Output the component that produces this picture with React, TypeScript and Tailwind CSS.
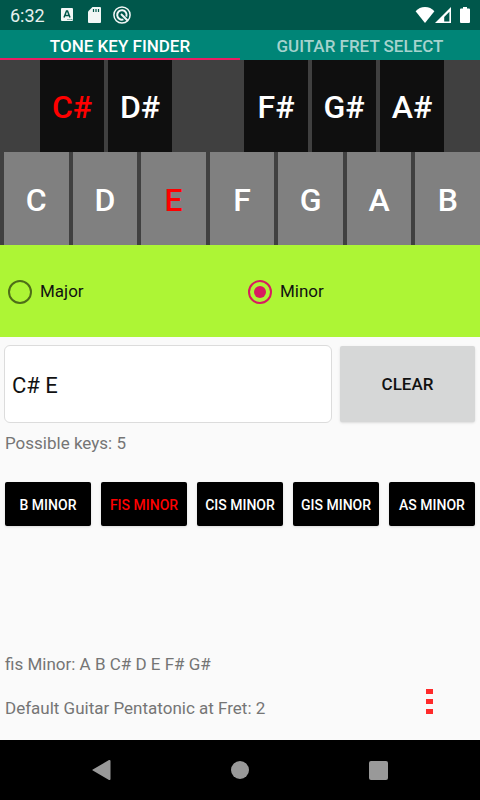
import React, { useState } from 'react';
import { clsx } from 'clsx';

type Mode = 'Major' | 'Minor';

// null is the gap between D# and F#
const BLACK_KEYS: (string | null)[] = ['C#', 'D#', null, 'F#', 'G#', 'A#'];
const WHITE_KEYS = ['C', 'D', 'E', 'F', 'G', 'A', 'B'];
const POSSIBLE_KEYS = ['B Minor', 'fis Minor', 'cis Minor', 'gis Minor', 'as Minor'];

function StatusBar() {
  return (
    <header className="flex h-[30px] items-center justify-between bg-[#00574b] pl-2.5 pr-2 text-white">
      <div className="flex items-center">
        <span className="w-[51px] pt-0.5 text-[18px] leading-7 text-[#e6f0ee]">6:32</span>
        {/* keyboard language */}
        <svg className="h-4 w-3" viewBox="0 0 12 16" fill="none">
          <rect x="0" y="1" width="12" height="13" rx="1" fill="#f2f7f6" />
          <path d="M3 10.5 5.5 4h1L9 10.5M4 8.5h4" stroke="#00574b" strokeWidth="1.5" />
          <path d="M6.5 12.5h1M8.5 12.5h1M10.3 12.5h1" stroke="#00574b" strokeWidth="0.8" />
        </svg>
        {/* sd card */}
        <svg className="ml-[15px] h-4 w-[13px]" viewBox="0 0 13 16" fill="none">
          <path d="M4.5 0H12a1 1 0 0 1 1 1v14a1 1 0 0 1-1 1H1a1 1 0 0 1-1-1V4.5z" fill="#f2f7f6" />
          <path d="M5.5 2v3M8 2v3M10.5 2v3" stroke="#00574b" strokeWidth="1.2" />
        </svg>
        <svg className="ml-3 h-[18px] w-[18px]" viewBox="0 0 18 18" fill="none" stroke="#f2f7f6">
          <circle cx="9" cy="9" r="8.1" strokeWidth="1.5" />
          <path d="M13.3 10.6A4.7 4.7 0 1 0 10.4 13.4" strokeWidth="2" />
          <path d="M8 8 14.8 14.8" strokeWidth="2" />
        </svg>
      </div>
      <div className="flex items-center">
        <svg className="h-4 w-5" viewBox="0 0 20 16">
          <path d="M10 16 .6 4.2C3 1.6 6.3 0 10 0s7 1.6 9.4 4.2z" fill="#fff" />
        </svg>
        <svg className="h-4 w-4" viewBox="0 0 16 16">
          <path d="M16 0v16H0zM14.4 4.8 9.2 10v4.4h5.2z" fill="#fff" fillRule="evenodd" />
        </svg>
        <svg className="ml-[9px] mr-0.5 h-4 w-2.5" viewBox="0 0 10 16">
          <path d="M3 0h4v1.6h2a1 1 0 0 1 1 1V15a1 1 0 0 1-1 1H1a1 1 0 0 1-1-1V2.6a1 1 0 0 1 1-1h2z" fill="#fff" />
        </svg>
      </div>
    </header>
  );
}

function Tabs() {
  return (
    <nav className="grid h-[30px] grid-cols-2 bg-[#008577] text-[17px] font-medium leading-6">
      <button className="border-b-2 border-[#e91e63] pt-1 text-white">TONE KEY FINDER</button>
      <button className="border-b-2 border-transparent pt-1 text-[#a6d3ce]">GUITAR FRET SELECT</button>
    </nav>
  );
}

interface PianoProps {
  notes: string[];
  onToggle: (note: string) => void;
}

function Piano({ notes, onToggle }: PianoProps) {
  return (
    <section className="bg-[#404040] text-[32px] font-medium">
      <div className="flex h-[92px] gap-1 pl-10 pr-9">
        {BLACK_KEYS.map((note, i) =>
          note ? (
            <button
              key={note}
              onClick={() => onToggle(note)}
              className={clsx('min-w-0 flex-1 bg-[#0f0f0f] pt-0.5', notes.includes(note) ? 'text-[#ff0000]' : 'text-white')}
            >
              {note}
            </button>
          ) : (
            <div key={i} className="flex-1" />
          )
        )}
      </div>
      <div className="flex h-[93px] gap-1 pl-1">
        {WHITE_KEYS.map((note) => (
          <button
            key={note}
            onClick={() => onToggle(note)}
            className={clsx('min-w-0 flex-1 bg-[#808080] pt-0.5', notes.includes(note) ? 'text-[#ff0000]' : 'text-white')}
          >
            {note}
          </button>
        ))}
      </div>
    </section>
  );
}

interface ModeRadioProps {
  value: Mode;
  checked: boolean;
  onChange: (mode: Mode) => void;
}

function ModeRadio({ value, checked, onChange }: ModeRadioProps) {
  return (
    <label className="flex items-center gap-2 pl-2 pt-0.5 text-[17px] text-[#111]">
      <input
        type="radio"
        name="mode"
        value={value}
        checked={checked}
        onChange={() => onChange(value)}
        className="grid h-6 w-6 appearance-none place-items-center rounded-full border-2 border-[#4e6e18] before:h-3 before:w-3 before:rounded-full checked:border-[#d81b60] checked:before:bg-[#d81b60]"
      />
      {value}
    </label>
  );
}

function NavBar() {
  return (
    <footer className="grid h-[60px] grid-cols-[138px_138px_138px] place-items-center justify-center bg-black">
      <button aria-label="Back">
        <svg className="h-5 w-5" viewBox="0 0 20 20">
          <path d="M17.5 0a1 1 0 0 1 1 1v18a1 1 0 0 1-1.5.9L.8 10.6a.7.7 0 0 1 0-1.2L17 .1z" fill="#999" />
        </svg>
      </button>
      <button aria-label="Home" className="h-[18px] w-[18px] rounded-full bg-[#999]" />
      <button aria-label="Overview" className="h-[19px] w-[19px] rounded-[2px] bg-[#999]" />
    </footer>
  );
}

export default function App() {
  const [notes, setNotes] = useState<string[]>(['C#', 'E']);
  const [mode, setMode] = useState<Mode>('Minor');
  const [selected, setSelected] = useState('fis Minor');

  const toggleNote = (note: string) => {
    setNotes((prev) => (prev.includes(note) ? prev.filter((n) => n !== note) : [...prev, note]));
  };

  return (
    <div className="flex min-h-screen flex-col bg-[#fafafa] font-[Roboto,sans-serif]">
      <StatusBar />
      <Tabs />
      <Piano notes={notes} onToggle={toggleNote} />

      <div role="radiogroup" aria-label="Mode" className="grid h-[92px] grid-cols-2 bg-[#adf535]">
        <ModeRadio value="Major" checked={mode === 'Major'} onChange={setMode} />
        <ModeRadio value="Minor" checked={mode === 'Minor'} onChange={setMode} />
      </div>

      <main className="flex flex-1 flex-col">
        <div className="flex items-center gap-2 pl-1 pr-[5px] pt-2">
          <input
            aria-label="Selected tones"
            readOnly
            value={notes.join(' ')}
            className="h-[78px] min-w-0 flex-1 rounded-md border border-[#dcdcdc] bg-white px-[7px] pt-0.5 text-[22px] text-[#111] outline-none"
          />
          <button
            onClick={() => setNotes([])}
            className="h-[76px] w-[135px] rounded-[2px] bg-[#d6d7d7] pt-0.5 text-[17px] font-medium text-[#111] shadow-sm"
          >
            CLEAR
          </button>
        </div>

        <p className="mt-2.5 px-[5px] text-[17px] leading-5 text-[#757575]">Possible keys: {POSSIBLE_KEYS.length}</p>

        <div className="mt-[29px] grid grid-cols-5 gap-2.5 px-[5px]">
          {POSSIBLE_KEYS.map((name) => (
            <button
              key={name}
              onClick={() => setSelected(name)}
              className={clsx(
                'h-11 whitespace-nowrap rounded-[2px] bg-black pt-0.5 text-[14px] font-medium uppercase shadow-sm',
                name === selected ? 'text-[#ff0000]' : 'text-white'
              )}
            >
              {name}
            </button>
          ))}
        </div>

        <div className="mt-auto flex items-end justify-between pb-[22px] pl-[5px] pr-10 text-[17px] leading-5 text-[#757575]">
          <div className="flex flex-col gap-6">
            <p>{selected}: A B C# D E F# G#</p>
            <p>Default Guitar Pentatonic at Fret: 2</p>
          </div>
          <button aria-label="More options" className="flex w-[21px] flex-col items-center gap-[5px] pb-1">
            <span className="h-[5px] w-[7px] bg-[#ff2a2a]" />
            <span className="h-[5px] w-[7px] bg-[#ff2a2a]" />
            <span className="h-[5px] w-[7px] bg-[#ff2a2a]" />
          </button>
        </div>
      </main>

      <NavBar />
    </div>
  );
}
